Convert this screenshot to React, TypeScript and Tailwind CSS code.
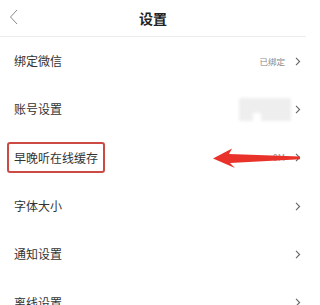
import React from "react";

const Chevron = () => (
  <svg width="6" height="9" viewBox="0 0 6 9" className="shrink-0">
    <path d="M1 0.8 L4.6 4.5 L1 8.2" fill="none" stroke="#666" strokeWidth="1.1" />
  </svg>
);

const Row = ({
  label,
  right,
  overlay,
}: {
  label: string;
  right?: React.ReactNode;
  overlay?: React.ReactNode;
}) => (
  <div className="relative flex h-[48.3px] items-center justify-between pl-[14px] pr-[5px]">
    <span className="text-[12px] leading-none text-[#333]">{label}</span>
    <div className="flex items-center gap-[10px]">
      {right}
      <Chevron />
    </div>
    {overlay}
  </div>
);

export default function App() {
  return (
    <div
      className="h-[305px] w-[306px] overflow-hidden bg-white"
      style={{ fontFamily: '"Noto Sans CJK SC", "Noto Sans", sans-serif' }}
    >
      <div className="relative flex h-[37px] items-center justify-center border-b border-[#ececec]">
        <svg width="10" height="16" viewBox="0 0 10 16" className="absolute left-[9px] top-[9px]">
          <path d="M8 1 L1.5 8 L8 15" fill="none" stroke="#8a8a8a" strokeWidth="1" />
        </svg>
        <span className="text-[14px] font-bold leading-none text-[#222]">设置</span>
      </div>
      <Row
        label="绑定微信"
        right={<span className="text-[8.5px] leading-none text-[#888]">已绑定</span>}
      />
      <Row
        label="账号设置"
        right={
          <div className="relative mr-[-6px] h-[23px] w-[52px] blur-[1.5px]">
            <div className="absolute inset-0 rounded-[2px] bg-[#eeeeee]" />
            <div className="absolute bottom-0 left-[14px] h-[8px] w-[8px] bg-white" />
          </div>
        }
      />
      <Row
        label="早晚听在线缓存"
        right={<span className="text-[9px] leading-none text-[#999]">0M</span>}
        overlay={
          <>
            <div className="pointer-events-none absolute left-[7px] top-[8px] h-[31px] w-[98px] rounded-[3px] border-2 border-[#cc4a44]" />
            <svg
              width="90"
              height="22"
              viewBox="0 0 90 22"
              className="pointer-events-none absolute left-[212px] top-[13px]"
            >
              <polygon
                points="1,11.5 20,1.5 17,7 88,9.5 88,12.3 18,16 23,21"
                fill="#e8322a"
              />
            </svg>
          </>
        }
      />
      <Row label="字体大小" />
      <Row label="通知设置" />
      <Row label="离线设置" />
    </div>
  );
}
